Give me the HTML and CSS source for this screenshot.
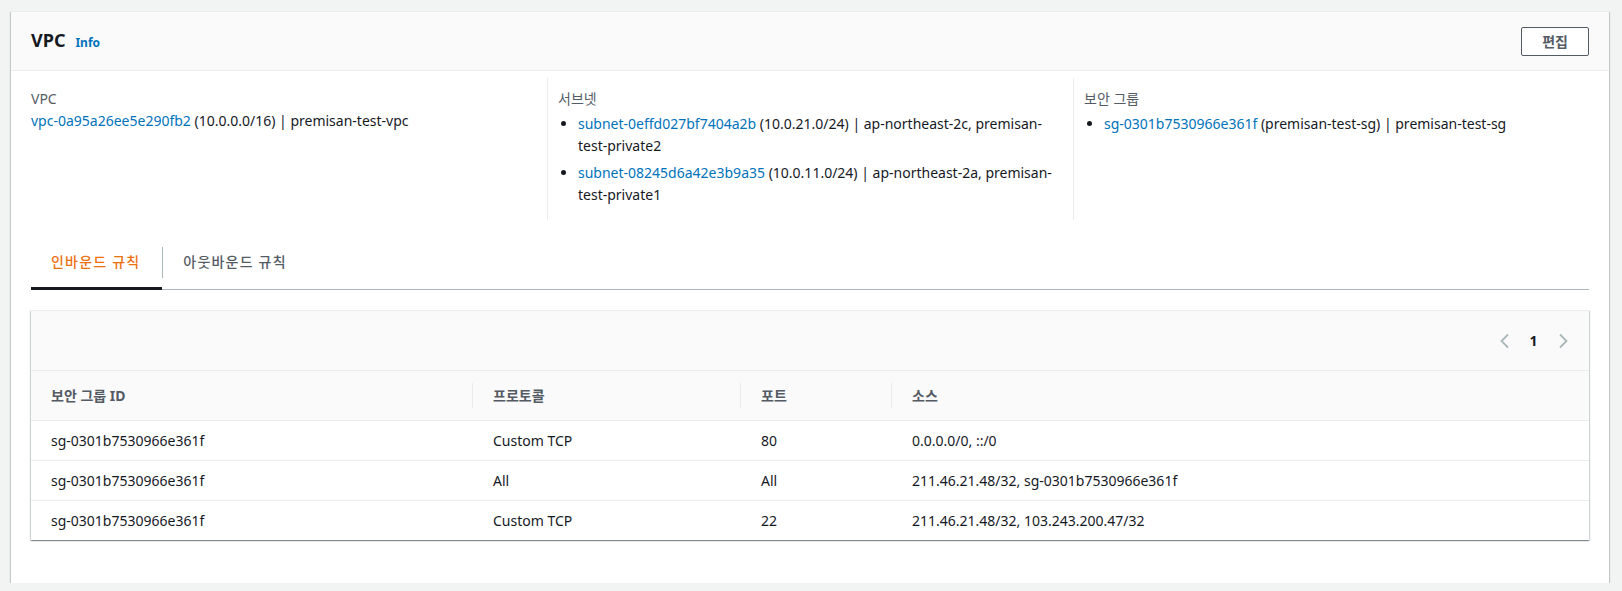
FILE: index.html
```html
<!DOCTYPE html>
<html lang="ko">
<head>
<meta charset="utf-8">
<title>VPC</title>
<link rel="stylesheet" href="styles.css">
</head>
<body>
<div class="card">
  <div class="card-header">
    <div class="title-wrap">
      <h2 class="title">VPC</h2>
      <a class="info">Info</a>
    </div>
    <button class="btn">편집</button>
  </div>
  <div class="card-body">
    <div class="columns">
      <div class="col">
        <div class="label">VPC</div>
        <div class="value"><a class="link">vpc-0a95a26ee5e290fb2</a> (10.0.0.0/16) | premisan-test-vpc</div>
      </div>
      <div class="col">
        <div class="label">서브넷</div>
        <ul class="list">
          <li><a class="link">subnet-0effd027bf7404a2b</a> (10.0.21.0/24) | ap-northeast-2c, premisan-test-private2</li>
          <li><a class="link">subnet-08245d6a42e3b9a35</a> (10.0.11.0/24) | ap-northeast-2a, premisan-test-private1</li>
        </ul>
      </div>
      <div class="col">
        <div class="label">보안 그룹</div>
        <ul class="list">
          <li><a class="link">sg-0301b7530966e361f</a> (premisan-test-sg) | premisan-test-sg</li>
        </ul>
      </div>
    </div>

    <div class="tabs">
      <div class="tab active">인바운드 규칙</div>
      <span class="tab-sep"></span>
      <div class="tab">아웃바운드 규칙</div>
    </div>

    <div class="table-wrap">
      <div class="table-tools">
        <div class="pager">
          <span class="pg-btn"><svg width="16" height="16" viewBox="0 0 16 16"><path d="M11 1.5 4.5 8l6.5 6.5" fill="none" stroke="#aab7b8" stroke-width="1.8"/></svg></span>
          <span class="pg-btn pg-num">1</span>
          <span class="pg-btn"><svg width="16" height="16" viewBox="0 0 16 16"><path d="M5 1.5 11.5 8 5 14.5" fill="none" stroke="#aab7b8" stroke-width="1.8"/></svg></span>
        </div>
      </div>
      <table class="rules">
        <colgroup>
          <col class="c1"><col class="c2"><col class="c3"><col class="c4">
        </colgroup>
        <thead>
          <tr><th>보안 그룹 ID</th><th>프로토콜</th><th>포트</th><th class="last">소스</th></tr>
        </thead>
        <tbody>
          <tr><td>sg-0301b7530966e361f</td><td>Custom TCP</td><td>80</td><td>0.0.0.0/0, ::/0</td></tr>
          <tr><td>sg-0301b7530966e361f</td><td>All</td><td>All</td><td>211.46.21.48/32, sg-0301b7530966e361f</td></tr>
          <tr><td>sg-0301b7530966e361f</td><td>Custom TCP</td><td>22</td><td>211.46.21.48/32, 103.243.200.47/32</td></tr>
        </tbody>
      </table>
    </div>
  </div>
</div>
</body>
</html>
```

FILE: styles.css
```css
html, body {
  margin: 0;
}
body {
  background: #f2f3f3;
  padding: 11px 13px 0 11px;
  font-family: "Noto Sans", "Noto Sans CJK KR", sans-serif;
  font-size: 14px;
  line-height: 22px;
  color: #16191f;
}

.card {
  background: #fff;
  border-top: 1px solid #eaeded;
  box-shadow: 0 1px 1px 0 rgba(0, 28, 36, 0.3), 1px 1px 1px 0 rgba(0, 28, 36, 0.15), -1px 1px 1px 0 rgba(0, 28, 36, 0.15);
}

.card-header {
  height: 58px;
  padding: 0 20px;
  display: flex;
  align-items: center;
  justify-content: space-between;
  background: #fafafa;
  border-bottom: 1px solid #eaeded;
}

.title-wrap {
  display: flex;
  align-items: baseline;
}

.title {
  margin: 0;
  font-size: 18px;
  line-height: 22px;
  font-weight: 700;
  color: #16191f;
}

.info {
  margin-left: 10px;
  font-size: 12px;
  font-weight: 700;
  color: #0073bb;
}

.btn {
  font-family: inherit;
  font-size: 14px;
  font-weight: 700;
  line-height: 19px;
  color: #545b64;
  background: #fff;
  border: 1px solid #545b64;
  border-radius: 2px;
  padding: 4px 20px;
  height: 29px;
}

.card-body {
  padding: 7px 20px 43px;
}

.columns {
  display: grid;
  grid-template-columns: repeat(3, 1fr);
  margin: 0 -10px;
}

.col {
  padding: 10px 10px 9px;
}

.col + .col {
  border-left: 1px solid #eaeded;
}

.label {
  color: #545b64;
}

.link {
  color: #0073bb;
}

.list {
  margin: 3px 0 0;
  padding-left: 20px;
}

.list li {
  margin-bottom: 5px;
}

.tabs {
  margin-top: 15px;
  display: flex;
  align-items: center;
  border-bottom: 1px solid #aab7b8;
}

.tab {
  position: relative;
  padding: 16px 22px 16px 20px;
  color: #545b64;
  font-weight: 500;
  letter-spacing: 1.2px;
}

.tab.active {
  color: #ec7211;
}

.tab.active::after {
  content: "";
  position: absolute;
  left: 0;
  right: 0;
  bottom: -1px;
  height: 3px;
  background: #16191f;
}

.tab-sep {
  width: 1px;
  height: 31px;
  background: #aab7b8;
}

.table-wrap {
  margin-top: 20px;
  background: #fff;
  border-top: 1px solid #eaeded;
  box-shadow: 0 1px 1px 0 rgba(0, 28, 36, 0.3), 1px 1px 1px 0 rgba(0, 28, 36, 0.15), -1px 1px 1px 0 rgba(0, 28, 36, 0.15);
}

.table-tools {
  height: 59px;
  background: #fafafa;
  display: flex;
  align-items: center;
  justify-content: flex-end;
  padding: 0 12px 0 20px;
}

.pager {
  display: flex;
  align-items: center;
}

.pg-btn {
  width: 29px;
  height: 22px;
  display: flex;
  align-items: center;
  justify-content: center;
}

.pg-num {
  font-weight: 700;
  color: #16191f;
}

.rules {
  width: 100%;
  border-collapse: collapse;
  table-layout: fixed;
}

.c1 { width: 442px; }
.c2 { width: 268px; }
.c3 { width: 151px; }

.rules th {
  height: 49px;
  padding: 0 20px;
  text-align: left;
  font-weight: 700;
  color: #545b64;
  background-color: #fafafa;
  background-image: linear-gradient(#eaeded, #eaeded);
  background-repeat: no-repeat;
  background-position: right center;
  background-size: 1px 25px;
  border-top: 1px solid #eaeded;
}

.rules th.last {
  background-image: none;
}

.rules td {
  height: 39px;
  padding: 0 20px;
  border-top: 1px solid #eaeded;
  color: #16191f;
}
```
